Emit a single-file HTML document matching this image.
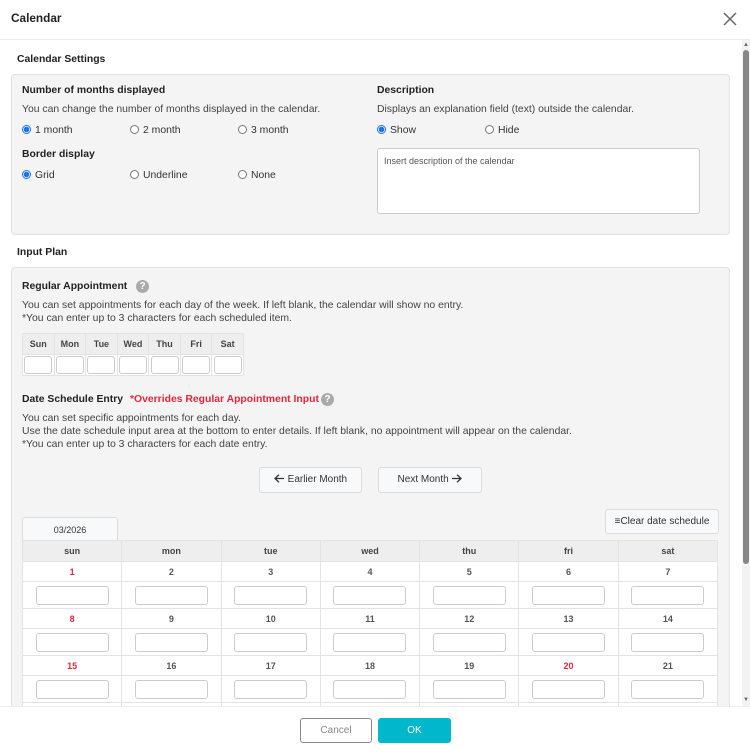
<!DOCTYPE html>
<html><head><meta charset="utf-8"><style>
*{box-sizing:border-box;margin:0;padding:0}
body{width:750px;height:754px;overflow:hidden;background:#fff;font-family:"Liberation Sans",Arial,sans-serif;color:#333;position:relative;font-size:10.4px}
.a{position:absolute}
.b{font-weight:bold;color:#222}
.panel{position:absolute;background:#f4f4f4;border:1px solid #e2e2e2;border-radius:4px}
.r{position:absolute;font-size:10.4px;color:#333}
.r i{display:inline-block;width:9px;height:9px;border-radius:50%;border:1px solid #777;background:#fff;vertical-align:-1px;margin-right:4px}
.r i.on{border:1px solid #1a73e8;background:radial-gradient(circle,#1a73e8 0 2.5px,#fff 3px)}
table{border-collapse:collapse;table-layout:fixed}
.wk td{border:1px solid #e3e3e3;text-align:center;font-size:9px;font-weight:bold;color:#444}
.wk tr:first-child td{background:#eee;height:21px}
.wk tr:last-child td{background:#fff;height:21px;padding:1px}
.box{display:block;margin:0 auto;border:1px solid #ccc;border-radius:3px;background:#fff}
.cal td{border:1px solid #e3e3e3;text-align:center;background:#fff;font-size:9px;color:#555;font-weight:bold}
.cal tr.h td{background:#eee;height:21px;color:#444}
.cal tr.d td{height:20px}
.cal tr.i td{height:27px}
.red{color:#e4283a!important}
.btn{position:absolute;background:#f8f9fb;border:1px solid #dcdcdc;border-radius:3px;font-size:10px;color:#333;text-align:center}
.p{position:absolute;font-size:10.4px;color:#444;line-height:13px}
.t{position:absolute;font-weight:bold;color:#222;font-size:10.4px}
</style></head><body>
<div class="a b" style="left:11px;top:11px;font-size:11.8px">Calendar</div>
<svg class="a" style="left:723px;top:12px" width="14" height="14" viewBox="0 0 14 14"><path d="M1 1L13 13M13 1L1 13" stroke="#666" stroke-width="1.5" fill="none"/></svg>
<div class="a" style="left:0;top:39px;width:750px;height:1px;background:#eee"></div>
<div class="a" style="left:742px;top:40px;width:8px;height:666px;background:#f3f3f3"></div>
<div class="a" style="left:743px;top:50px;width:6px;height:514px;background:#888;border-radius:3px"></div>
<div class="a" style="left:743px;top:42px;font-size:6px;color:#666">▲</div>
<div class="a" style="left:743px;top:697px;font-size:6px;color:#666">▼</div>

<div class="t" style="left:17px;top:54px">Calendar Settings</div>
<div class="panel" style="left:11px;top:74px;width:719px;height:161px"></div>
<div class="t" style="left:22px;top:85px">Number of months displayed</div>
<div class="p" style="left:22px;top:103px">You can change the number of months displayed in the calendar.</div>
<div class="r" style="left:22px;top:125px"><i class="on"></i>1 month</div>
<div class="r" style="left:130px;top:125px"><i></i>2 month</div>
<div class="r" style="left:238px;top:125px"><i></i>3 month</div>
<div class="t" style="left:22px;top:149px">Border display</div>
<div class="r" style="left:22px;top:170px"><i class="on"></i>Grid</div>
<div class="r" style="left:130px;top:170px"><i></i>Underline</div>
<div class="r" style="left:238px;top:170px"><i></i>None</div>
<div class="t" style="left:377px;top:85px">Description</div>
<div class="p" style="left:377px;top:103px">Displays an explanation field (text) outside the calendar.</div>
<div class="r" style="left:377px;top:125px"><i class="on"></i>Show</div>
<div class="r" style="left:485px;top:125px"><i></i>Hide</div>
<div class="a" style="left:377px;top:148px;width:323px;height:66px;background:#fff;border:1px solid #ccc;border-radius:3px;font-size:9px;color:#555;padding:7px 6px">Insert description of the calendar</div>

<div class="t" style="left:17px;top:247px">Input Plan</div>
<div class="panel" style="left:11px;top:267px;width:719px;height:480px"></div>
<div class="t" style="left:22px;top:281px">Regular Appointment</div>
<div class="a" style="left:136px;top:280px;width:13px;height:13px;border-radius:50%;background:#aaa;color:#fff;font-size:10px;font-weight:bold;text-align:center;line-height:13px">?</div>
<div class="p" style="left:22px;top:299px">You can set appointments for each day of the week. If left blank, the calendar will show no entry.<br>*You can enter up to 3 characters for each scheduled item.</div>
<table class="wk a" style="left:22px;top:333px;width:222px">
<tr><td>Sun</td><td>Mon</td><td>Tue</td><td>Wed</td><td>Thu</td><td>Fri</td><td>Sat</td></tr>
<tr><td><span class="box" style="width:28px;height:18px"></span></td><td><span class="box" style="width:28px;height:18px"></span></td><td><span class="box" style="width:28px;height:18px"></span></td><td><span class="box" style="width:28px;height:18px"></span></td><td><span class="box" style="width:28px;height:18px"></span></td><td><span class="box" style="width:28px;height:18px"></span></td><td><span class="box" style="width:28px;height:18px"></span></td></tr>
</table>
<div class="t" style="left:22px;top:394px">Date Schedule Entry <span style="color:#e4283a;margin-left:4px">*Overrides Regular Appointment Input</span></div>
<div class="a" style="left:321px;top:393px;width:13px;height:13px;border-radius:50%;background:#aaa;color:#fff;font-size:10px;font-weight:bold;text-align:center;line-height:13px">?</div>
<div class="p" style="left:22px;top:412px">You can set specific appointments for each day.<br>Use the date schedule input area at the bottom to enter details. If left blank, no appointment will appear on the calendar.<br>*You can enter up to 3 characters for each date entry.</div>
<div class="btn" style="left:259px;top:467px;width:103px;height:26px;line-height:24px"><svg width="11" height="9" viewBox="0 0 11 9" style="vertical-align:-1px"><path d="M10 4.5H1M5 0.7L1 4.5L5 8.3" stroke="#333" stroke-width="1.3" fill="none"/></svg> Earlier Month</div>
<div class="btn" style="left:378px;top:467px;width:104px;height:26px;line-height:24px">Next Month <svg width="11" height="9" viewBox="0 0 11 9" style="vertical-align:-1px"><path d="M1 4.5H10M6 0.7L10 4.5L6 8.3" stroke="#333" stroke-width="1.3" fill="none"/></svg></div>
<div class="btn" style="left:605px;top:509px;width:114px;height:25px;line-height:23px"><span style="font-style:italic;font-weight:bold">≡</span>Clear date schedule</div>
<div class="a" style="left:22px;top:517px;width:96px;height:24px;background:#f8f9fb;border:1px solid #dcdcdc;border-bottom:none;border-radius:3px 3px 0 0;font-size:9px;text-align:center;line-height:24px;color:#333">03/2026</div>
<div class="a" style="left:22px;top:540px;width:696px;height:166px;overflow:hidden">
<table class="cal" style="width:696px">
<tr class="h"><td>sun</td><td>mon</td><td>tue</td><td>wed</td><td>thu</td><td>fri</td><td>sat</td></tr>
<tr class="d"><td class="red">1</td><td>2</td><td>3</td><td>4</td><td>5</td><td>6</td><td>7</td></tr>
<tr class="i"><td><span class="box" style="width:73px;height:19px"></span></td><td><span class="box" style="width:73px;height:19px"></span></td><td><span class="box" style="width:73px;height:19px"></span></td><td><span class="box" style="width:73px;height:19px"></span></td><td><span class="box" style="width:73px;height:19px"></span></td><td><span class="box" style="width:73px;height:19px"></span></td><td><span class="box" style="width:73px;height:19px"></span></td></tr>
<tr class="d"><td class="red">8</td><td>9</td><td>10</td><td>11</td><td>12</td><td>13</td><td>14</td></tr>
<tr class="i"><td><span class="box" style="width:73px;height:19px"></span></td><td><span class="box" style="width:73px;height:19px"></span></td><td><span class="box" style="width:73px;height:19px"></span></td><td><span class="box" style="width:73px;height:19px"></span></td><td><span class="box" style="width:73px;height:19px"></span></td><td><span class="box" style="width:73px;height:19px"></span></td><td><span class="box" style="width:73px;height:19px"></span></td></tr>
<tr class="d"><td class="red">15</td><td>16</td><td>17</td><td>18</td><td>19</td><td class="red">20</td><td>21</td></tr>
<tr class="i"><td><span class="box" style="width:73px;height:19px"></span></td><td><span class="box" style="width:73px;height:19px"></span></td><td><span class="box" style="width:73px;height:19px"></span></td><td><span class="box" style="width:73px;height:19px"></span></td><td><span class="box" style="width:73px;height:19px"></span></td><td><span class="box" style="width:73px;height:19px"></span></td><td><span class="box" style="width:73px;height:19px"></span></td></tr>
<tr class="d"><td>22</td><td>23</td><td>24</td><td>25</td><td>26</td><td>27</td><td>28</td></tr>
</table></div>

<div class="a" style="left:0;top:706px;width:750px;height:48px;background:#fff;border-top:1px solid #eee"></div>
<div class="a" style="left:300px;top:718px;width:72px;height:25px;border:1px solid #888;border-radius:3px;font-size:10px;color:#888;text-align:center;line-height:23px;background:#fff">Cancel</div>
<div class="a" style="left:378px;top:718px;width:73px;height:25px;border-radius:3px;background:#00b7cc;font-size:10px;color:#fff;text-align:center;line-height:25px">OK</div>
</body></html>
